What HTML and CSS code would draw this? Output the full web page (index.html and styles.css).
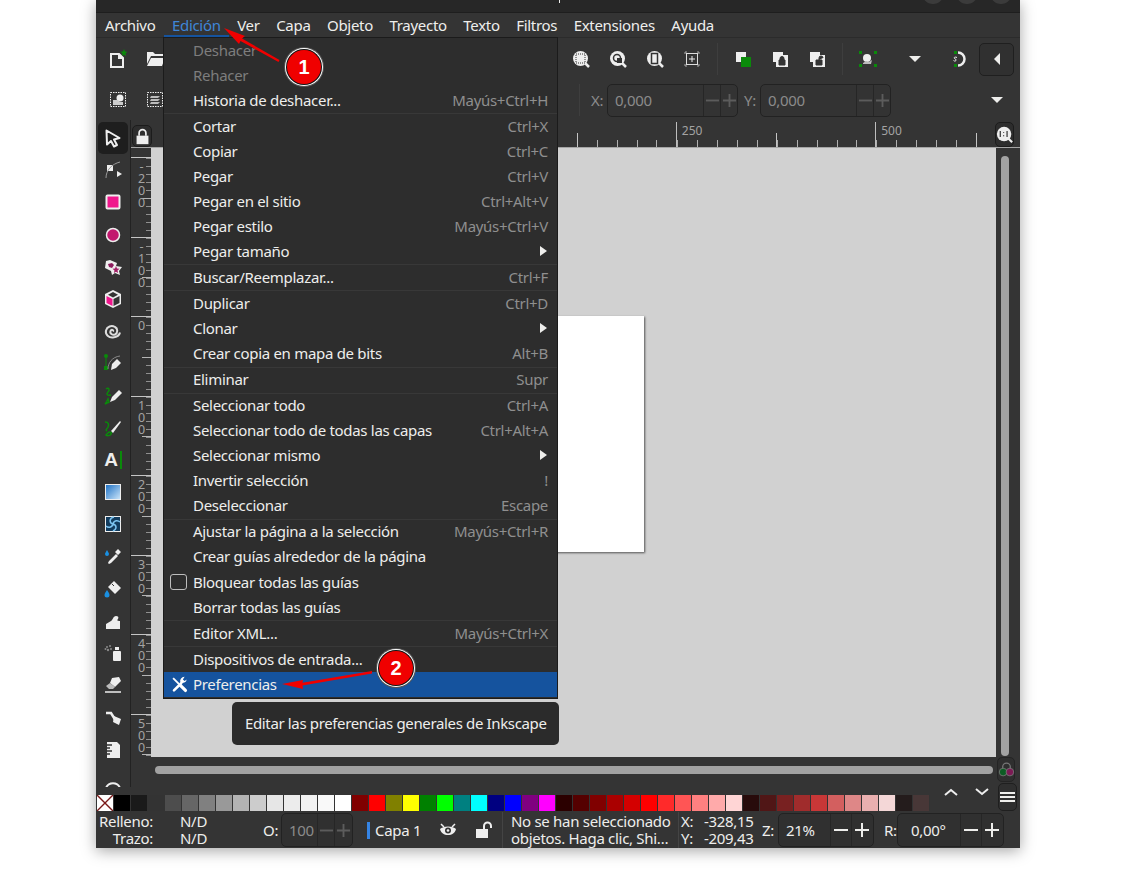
FILE: index.html
```html
<!DOCTYPE html>
<html lang="es">
<head>
    <meta charset="UTF-8">
    <title>Inkscape - Edición</title>
    <link rel="stylesheet" href="styles.css">
</head>
<body>
<svg class="sprites" xmlns="http://www.w3.org/2000/svg">
    <defs><linearGradient id="g-blue" x1="0" y1="0" x2="1" y2="1"><stop offset="0" stop-color="#1b6fc4"/><stop offset="1" stop-color="#cfe8fb"/></linearGradient></defs>
    <symbol id="i-new" viewBox="0 0 20 20"><path d="M4 5h8l4 4v9H4z" fill="none" stroke="#eee" stroke-width="2"/><path d="M11 4v6h6z" fill="#eee"/><path d="M17 0l1 2.500 2.500.3-2 1.700.6 2.500-2.100-1.300-2.100 1.300.6-2.500-2-1.700 2.500-.3z" fill="#0a8a0a"/></symbol>
    <symbol id="i-open" viewBox="0 0 20 20"><path d="M2 3h6l2 2h8v2H6l-4 8zM6 9h14l-3 8H2z" fill="#eee"/></symbol>
    <symbol id="i-selgroup" viewBox="0 0 20 20"><rect x="2.500" y="2.500" width="15" height="14" fill="none" stroke="#eee" stroke-dasharray="1.500 1"/><circle cx="12" cy="8" r="3.500" fill="#eee"/><path d="M5 10h5l2 2h3v3H5z" fill="#ccc"/></symbol>
    <symbol id="i-layers" viewBox="0 0 20 20"><rect x="2.500" y="2.500" width="15" height="14" fill="none" stroke="#eee" stroke-dasharray="1.500 1"/><path d="M6 6h9l-2 2H5zM6 9h9l-2 2H5zM6 12h9l-2 2H5z" fill="#bbb"/></symbol>
    <symbol id="i-zoomsel" viewBox="0 0 20 20"><circle cx="9.500" cy="9.500" r="7.500" fill="#eee"/><path d="M14 14l4 4" stroke="#eee" stroke-width="2.500"/><rect x="5" y="5" width="9" height="9" fill="none" stroke="#333" stroke-dasharray="1 1"/></symbol>
    <symbol id="i-zoomdraw" viewBox="0 0 20 20"><circle cx="9.500" cy="9.500" r="7.500" fill="#eee"/><path d="M14 14l4 4" stroke="#eee" stroke-width="2.500"/><circle cx="9" cy="9" r="3.500" fill="none" stroke="#333" stroke-width="1.500"/><rect x="9" y="9" width="5" height="5" fill="#333"/></symbol>
    <symbol id="i-zoompage" viewBox="0 0 20 20"><circle cx="9.500" cy="9.500" r="7.500" fill="#eee"/><path d="M14 14l4 4" stroke="#eee" stroke-width="2.500"/><rect x="6.500" y="4.500" width="6" height="10" fill="#eee" stroke="#333" stroke-width="1.500"/></symbol>
    <symbol id="i-center" viewBox="0 0 20 20"><path d="M3 5V3h2M15 3h2v2M17 15v2h-2M5 17H3v-2" fill="none" stroke="#aaa"/><rect x="4.500" y="4.500" width="11" height="11" fill="none" stroke="#ddd"/><path d="M10 7v6M7 10h6" stroke="#eee"/></symbol>
    <symbol id="i-snapgreen" viewBox="0 0 20 20"><path d="M3 3h10v10H3z" fill="#eee"/><rect x="8" y="8" width="10" height="10" fill="#0a8a0a"/></symbol>
    <symbol id="i-locka" viewBox="0 0 20 20"><path d="M3 3h10v3H6v7H3z" fill="#eee"/><rect x="6" y="6" width="12" height="12" fill="#eee"/><path d="M9 11h6v5H9zM10 11V9.500a2 2 0 0 1 4 0V11" fill="#333" stroke="#333"/></symbol>
    <symbol id="i-lockb" viewBox="0 0 20 20"><path d="M3 3h10v3H6v7H3z" fill="#eee"/><rect x="6" y="6" width="12" height="12" fill="#eee"/><path d="M9 11h6v5H9zM12 11V9a2 2 0 0 1 4 0" fill="#333" stroke="#333"/></symbol>
    <symbol id="i-snap" viewBox="0 0 20 20"><path d="M1 2h3v3H1zM16 2h3v3h-3zM1 15h3v3H1zM16 15h3v3h-3z" fill="#0a8a0a"/><circle cx="9" cy="9" r="4" fill="#eee"/><path d="M5 14l3-2 3 1 3-2-1 4H5z" fill="#bbb"/></symbol>
    <symbol id="i-snapring" viewBox="0 0 20 20"><path d="M9 3.500a6.500 6.500 0 1 1 0 13" fill="none" stroke="#eee" stroke-width="2.500"/><rect x="5" y="2" width="3" height="3" fill="#0a8a0a"/><rect x="5" y="15" width="3" height="3" fill="#0a8a0a"/><path d="M8 8.500c-2-1-3.500 0-2.500 1s2.500 1 1.500 2-2 .5-2.500 0" fill="none" stroke="#eee"/></symbol>
    <symbol id="i-lock" viewBox="0 0 20 20"><path d="M3 9h14v10H3z" fill="#eee"/><path d="M6 9V6a4 4 0 0 1 8 0v3" fill="none" stroke="#eee" stroke-width="2"/></symbol>
    <symbol id="i-unlock" viewBox="0 0 20 20"><path d="M2 9h12v9H2z" fill="#eee"/><path d="M10 9V6a3.500 3.500 0 0 1 7 0v2" fill="none" stroke="#eee" stroke-width="2"/></symbol>
    <symbol id="i-eye" viewBox="0 0 20 20"><path d="M2 9c3-3.500 13-3.500 16 0-1 4-4 6-8 6s-7-2-8-6z" fill="#eee"/><circle cx="10" cy="10.500" r="3" fill="#333"/><circle cx="10" cy="10.500" r="1.300" fill="#eee"/><path d="M3 4l3 3M17 4l-3 3" stroke="#eee" stroke-width="1.500"/></symbol>
    <symbol id="i-zoom11" viewBox="0 0 20 20"><circle cx="9.500" cy="9.500" r="8.500" fill="#eee"/><path d="M14 14l5 5" stroke="#eee" stroke-width="2.500"/><path d="M5 6v7M9 7v1M9 11v1M13 6v7" stroke="#222" stroke-width="1.300" fill="none"/></symbol>
    <symbol id="i-colors" viewBox="0 0 20 20"><circle cx="10" cy="7" r="4.500" fill="none" stroke="#777" stroke-width="1.500"/><circle cx="6" cy="13" r="4.500" fill="#0d5c24" stroke="#777"/><circle cx="14" cy="13" r="4.500" fill="#7c1a55" stroke="#777"/></symbol>
    <symbol id="i-minus" viewBox="0 0 16 16"><path d="M1 8h14" stroke="currentColor" stroke-width="2"/></symbol>
    <symbol id="i-plus" viewBox="0 0 16 16"><path d="M1 8h14M8 1v14" stroke="currentColor" stroke-width="2"/></symbol>
    <symbol id="t-selector" viewBox="0 0 20 20"><path d="M3.500 2.500l13 7.500-5.500 1.500 3 5.500-3 1.500-3-5.500-4 3.500z" fill="#1f1f1f" stroke="#eee" stroke-width="2" stroke-linejoin="round"/></symbol>
    <symbol id="t-node" viewBox="0 0 20 20"><rect x="4" y="5" width="6" height="6" fill="#eee"/><path d="M3 18c0-8 6-14 14-16" fill="none" stroke="#999"/><path d="M14 11l5 3-5 3z" fill="#eee"/></symbol>
    <symbol id="t-rect" viewBox="0 0 20 20"><rect x="3.500" y="3.500" width="13" height="13" rx="1" fill="#f0168c" stroke="#eee" stroke-width="2"/></symbol>
    <symbol id="t-ellipse" viewBox="0 0 20 20"><circle cx="10" cy="10" r="6.500" fill="#c2186e" stroke="#eee" stroke-width="1.500"/></symbol>
    <symbol id="t-star" viewBox="0 0 20 20"><path d="M7 3l7 3-1 3 6 1-3 4 1 4-5-2-3 2-1-4-6-3 1-7z" fill="#eee"/><path d="M5 7l4-1 2 2-2 3-3-1z" fill="#8e1c5e"/><path d="M13 9l1 2.500 2.500.3-2 1.700.6 2.500-2.100-1.300-2.100 1.300.6-2.500-2-1.700 2.500-.3z" fill="#a01c64"/></symbol>
    <symbol id="t-cube" viewBox="0 0 20 20"><path d="M10 1l8 4v10l-8 4-8-4V5z" fill="#eee"/><path d="M3.500 7l6 3v7l-6-3z" fill="#f0168c"/><path d="M16.500 7l-6 3v7l6-3z" fill="#333"/><path d="M10 3l5 2.700-5 2.700-5-2.700z" fill="#333"/></symbol>
    <symbol id="t-spiral" viewBox="0 0 20 20"><path d="M10 10.500c1-1.500-1.500-2.500-2.500-.5-1 2.500 2 4.500 4.500 3.500 3-1.500 3-6 0-7.500-3.500-2-8-.5-9 3.500-1 4 3 7.500 7 7 4-.5 6.500-2.500 7-5" fill="none" stroke="#ddd" stroke-width="2"/></symbol>
    <symbol id="t-bezier" viewBox="0 0 20 20"><rect x="1" y="13" width="4" height="4" fill="#0a8a0a"/><circle cx="3" cy="3" r="2" fill="#0a8a0a"/><path d="M3 4v9" stroke="#0a8a0a"/><path d="M8 17l1-6 5-5 4 4-5 5z" fill="#eee"/><path d="M5 16c0-6 4-12 12-13" fill="none" stroke="#888"/></symbol>
    <symbol id="t-pencil" viewBox="0 0 20 20"><path d="M7 16l2-5 7-7 3 3-7 7z" fill="#eee"/><path d="M3 3c3-2 4 1 2 3s-1 4 3 3M5 13c-1 2-2 4-3 5l4-2z" fill="none" stroke="#0a8a0a" stroke-width="1.500"/></symbol>
    <symbol id="t-callig" viewBox="0 0 20 20"><path d="M8 13l9-10 1 1-8 11z" fill="#eee"/><path d="M6 14c2 0 3 1 2 2-1 2-4 2-5 1zM2 4c4 0 4 3 3 5s-3 3-1 4" fill="none" stroke="#0a8a0a" stroke-width="1.500"/></symbol>
    <symbol id="t-grad" viewBox="0 0 20 20"><rect x="2.500" y="2.500" width="15" height="15" fill="url(#g-blue)" stroke="#eee"/></symbol>
    <symbol id="t-mesh" viewBox="0 0 20 20"><rect x="2.500" y="2.500" width="15" height="15" fill="#123c5e" stroke="#eee"/><path d="M10 10C6 9 6 4 11 3M10 10c1-4 5-4 7-2M10 10c4 1 4 5 0 7M10 10c-1 4-5 4-7 2" fill="none" stroke="#7cc4f0" stroke-width="1.500"/></symbol>
    <symbol id="t-dropper" viewBox="0 0 20 20"><path d="M8 16l-2 1-1-1 1-2 7-7 2 2zM12 5l3-3 3 3-3 3z" fill="#eee"/><path d="M4 3c-1 2-2 3-2 4a2 2 0 0 0 4 0c0-1-1-2-2-4z" fill="#1a8fe0"/></symbol>
    <symbol id="t-bucket" viewBox="0 0 20 20"><path d="M11 2l7 7-6 6-7-7z" fill="#eee"/><path d="M9 5l2 2" stroke="#333"/><path d="M4 11c-1 2-2.500 3-2.500 5a2.500 2.500 0 0 0 5 0c0-2-1.500-3-2.500-5z" fill="#1a8fe0"/></symbol>
    <symbol id="t-tweak" viewBox="0 0 20 20"><path d="M3 18v-5l5-3c2-1 2-5 5-5 2 0 3 1 2 3-1 1-1 2 2 2v8z" fill="#eee"/></symbol>
    <symbol id="t-spray" viewBox="0 0 20 20"><rect x="10" y="8" width="8" height="10" rx="1" fill="#eee"/><rect x="12" y="4" width="4" height="3" fill="#eee"/><circle cx="4" cy="4" r="1" fill="#888"/><circle cx="7" cy="3" r="1" fill="#888"/><circle cx="5" cy="7" r="1.200" fill="#888"/><circle cx="8" cy="6" r="1" fill="#888"/><circle cx="2.500" cy="6" r="1" fill="#888"/></symbol>
    <symbol id="t-eraser" viewBox="0 0 20 20"><path d="M9 3l7-1 2 4-6 6-5-4z" fill="#eee"/><path d="M7 8l5 4-2 2H6l-3-3z" fill="#bbb"/><path d="M2 17h16" stroke="#eee" stroke-width="1.500"/></symbol>
    <symbol id="t-connector" viewBox="0 0 20 20"><path d="M3 6h5l5 8" fill="none" stroke="#eee" stroke-width="2.500"/><path d="M11 9l7 3-2 6-6-3z" fill="#eee"/></symbol>
    <symbol id="t-pages" viewBox="0 0 20 20"><path d="M4 2h10l3 3v13H4z" fill="#eee"/><path d="M4 5h5M4 8h3M4 11h5M4 14h3" stroke="#333" stroke-width="1.300"/></symbol>
    <symbol id="t-measure" viewBox="0 0 20 20"><path d="M3 16a7.500 7.500 0 0 1 14 0" fill="none" stroke="#eee" stroke-width="2"/></symbol>
    <symbol id="i-tools" viewBox="0 0 20 20"><path d="M2.500 2.500l7 7" stroke="#fff" stroke-width="2.200"/><path d="M11 11l6 6" stroke="#fff" stroke-width="3.800" stroke-linecap="round"/><path d="M3.500 17L12 8.500" stroke="#fff" stroke-width="3" stroke-linecap="round"/><path d="M16 1a5 5 0 0 0-5 6.500 5 5 0 0 0 7.500-3.500L16 6l-2-2z" fill="#fff"/></symbol>
</svg>

<div class="window">
    <div class="titlebar">
        <span class="title-tick"></span>
        <div class="wm-buttons"><span></span><span></span><span></span></div>
    </div>

    <nav class="menubar">
        <span class="menubar-item">Archivo</span>
        <span class="menubar-item active">Edición</span>
        <span class="menubar-item">Ver</span>
        <span class="menubar-item">Capa</span>
        <span class="menubar-item">Objeto</span>
        <span class="menubar-item">Trayecto</span>
        <span class="menubar-item">Texto</span>
        <span class="menubar-item">Filtros</span>
        <span class="menubar-item">Extensiones</span>
        <span class="menubar-item">Ayuda</span>
    </nav>

    <div class="toolbar toolbar-main">
        <svg class="ico"><use href="#i-new"/></svg>
        <svg class="ico"><use href="#i-open"/></svg>
        <div class="toolbar-right">
            <svg class="ico"><use href="#i-zoomsel"/></svg>
            <svg class="ico"><use href="#i-zoomdraw"/></svg>
            <svg class="ico"><use href="#i-zoompage"/></svg>
            <svg class="ico"><use href="#i-center"/></svg>
            <span class="tb-sep"></span>
            <svg class="ico"><use href="#i-snapgreen"/></svg>
            <svg class="ico"><use href="#i-locka"/></svg>
            <svg class="ico"><use href="#i-lockb"/></svg>
            <span class="tb-sep"></span>
            <svg class="ico"><use href="#i-snap"/></svg>
            <span class="tri-down"></span>
            <svg class="ico"><use href="#i-snapring"/></svg>
            <button class="more-btn"><span class="tri-left"></span></button>
        </div>
    </div>

    <div class="toolbar toolbar-opts">
        <svg class="ico"><use href="#i-selgroup"/></svg>
        <svg class="ico"><use href="#i-layers"/></svg>
        <div class="coords">
            <span class="tb-sep"></span>
            <span class="coord-label dim">X:</span>
            <div class="spin spin-coord dim">
                <span class="spin-value">0,000</span>
                <span class="spin-btn"><svg class="sign"><use href="#i-minus"/></svg></span>
                <span class="spin-btn"><svg class="sign"><use href="#i-plus"/></svg></span>
            </div>
            <span class="coord-label dim">Y:</span>
            <div class="spin spin-coord dim">
                <span class="spin-value">0,000</span>
                <span class="spin-btn"><svg class="sign"><use href="#i-minus"/></svg></span>
                <span class="spin-btn"><svg class="sign"><use href="#i-plus"/></svg></span>
            </div>
        </div>
        <span class="tri-down tri-end"></span>
    </div>

    <div class="workspace">
        <div class="tools">
            <span class="tool current"><svg class="ico"><use href="#t-selector"/></svg></span>
            <span class="tool"><svg class="ico"><use href="#t-node"/></svg></span>
            <span class="tool"><svg class="ico"><use href="#t-rect"/></svg></span>
            <span class="tool"><svg class="ico"><use href="#t-ellipse"/></svg></span>
            <span class="tool"><svg class="ico"><use href="#t-star"/></svg></span>
            <span class="tool"><svg class="ico"><use href="#t-cube"/></svg></span>
            <span class="tool"><svg class="ico"><use href="#t-spiral"/></svg></span>
            <span class="tool"><svg class="ico"><use href="#t-bezier"/></svg></span>
            <span class="tool"><svg class="ico"><use href="#t-pencil"/></svg></span>
            <span class="tool"><svg class="ico"><use href="#t-callig"/></svg></span>
            <span class="tool tool-text">A<i></i></span>
            <span class="tool"><svg class="ico"><use href="#t-grad"/></svg></span>
            <span class="tool"><svg class="ico"><use href="#t-mesh"/></svg></span>
            <span class="tool"><svg class="ico"><use href="#t-dropper"/></svg></span>
            <span class="tool"><svg class="ico"><use href="#t-bucket"/></svg></span>
            <span class="tool"><svg class="ico"><use href="#t-tweak"/></svg></span>
            <span class="tool"><svg class="ico"><use href="#t-spray"/></svg></span>
            <span class="tool"><svg class="ico"><use href="#t-eraser"/></svg></span>
            <span class="tool"><svg class="ico"><use href="#t-connector"/></svg></span>
            <span class="tool"><svg class="ico"><use href="#t-pages"/></svg></span>
            <span class="tool"><svg class="ico"><use href="#t-measure"/></svg></span>
        </div>

        <div class="canvas-area">
            <div class="ruler-row">
                <button class="corner-btn"><svg class="ico-sm"><use href="#i-lock"/></svg></button>
                <div class="hruler">
                    <div class="hblock"></div>
                    <div class="hblock"></div>
                    <div class="hblock"><span>250</span></div>
                    <div class="hblock"><span>500</span></div>
                </div>
                <button class="zoom-btn"><svg class="ico-sm"><use href="#i-zoom11"/></svg></button>
            </div>

            <div class="canvas-row">
                <div class="vruler">
                    <div class="vblock"><span>-200</span></div>
                    <div class="vblock"><span>-100</span></div>
                    <div class="vblock"><span>0</span></div>
                    <div class="vblock"><span>100</span></div>
                    <div class="vblock"><span>200</span></div>
                    <div class="vblock"><span>300</span></div>
                    <div class="vblock"><span>400</span></div>
                    <div class="vblock"><span>500</span></div>
                </div>
                <div class="canvas"><div class="sheet"></div></div>
                <div class="vscroll"><span class="vthumb"></span></div>
            </div>

            <div class="hscroll-row">
                <span class="hthumb"></span>
                <button class="color-btn"><svg class="ico-sm"><use href="#i-colors"/></svg></button>
            </div>
        </div>
    </div>

    <div class="palette-row">
        <div class="palette">
            <span class="swatch none"><svg viewBox="0 0 17 17"><path d="M0 0l17 17M17 0L0 17" stroke="#7a1a1a" stroke-width="1.500"/></svg></span>
            <span class="swatch c000"></span><span class="swatch c1a1"></span><span class="swatch c333"></span><span class="swatch c4d4"></span><span class="swatch c666"></span><span class="swatch c808"></span><span class="swatch c999"></span><span class="swatch cb3b"></span><span class="swatch cccc"></span><span class="swatch ce6e"></span><span class="swatch cece"></span><span class="swatch cf2f"></span><span class="swatch cf9f"></span><span class="swatch cfff"></span>
            <span class="swatch maroon"></span><span class="swatch red"></span><span class="swatch olive"></span><span class="swatch yellow"></span><span class="swatch green"></span><span class="swatch lime"></span><span class="swatch teal"></span><span class="swatch aqua"></span><span class="swatch navy"></span><span class="swatch blue"></span><span class="swatch purple"></span><span class="swatch fuchsia"></span>
            <span class="swatch r1"></span><span class="swatch r2"></span><span class="swatch r3"></span><span class="swatch r4"></span><span class="swatch r5"></span><span class="swatch r6"></span><span class="swatch r7"></span><span class="swatch r8"></span><span class="swatch r9"></span><span class="swatch r10"></span><span class="swatch r11"></span>
            <span class="swatch m1"></span><span class="swatch m2"></span><span class="swatch m3"></span><span class="swatch m4"></span><span class="swatch m5"></span><span class="swatch m6"></span><span class="swatch m7"></span><span class="swatch m8"></span><span class="swatch m9"></span><span class="swatch g1"></span><span class="swatch g2"></span>
        </div>
        <div class="palette-nav">
            <svg class="chev" viewBox="0 0 14 8"><path d="M1 7l6-5 6 5" fill="none" stroke="#eee" stroke-width="2"/></svg>
            <svg class="chev" viewBox="0 0 14 8"><path d="M1 1l6 5 6-5" fill="none" stroke="#eee" stroke-width="2"/></svg>
            <button class="burger"><i></i><i></i><i></i></button>
        </div>
    </div>

    <footer class="statusbar">
        <div class="fs-labels">Relleno:<br>Trazo:</div>
        <div class="fs-values">N/D<br>N/D</div>
        <span class="label-o">O:</span>
        <div class="spin spin-opacity dim">
            <span class="spin-value">100</span>
            <span class="spin-btn"><svg class="sign"><use href="#i-minus"/></svg></span>
            <span class="spin-btn"><svg class="sign"><use href="#i-plus"/></svg></span>
        </div>
        <span class="layer-mark"></span>
        <span class="layer-name">Capa 1</span>
        <svg class="ico eye"><use href="#i-eye"/></svg>
        <svg class="ico unlock"><use href="#i-unlock"/></svg>
        <div class="status-msg">No se han seleccionado<br>objetos. Haga clic, Shi…</div>
        <div class="pos-labels">X:<br>Y:</div>
        <div class="pos-values">-328,15<br>-209,43</div>
        <span class="label-z">Z:</span>
        <div class="spin spin-zoom">
            <span class="spin-value">21%</span>
            <span class="spin-btn"><svg class="sign"><use href="#i-minus"/></svg></span>
            <span class="spin-btn"><svg class="sign"><use href="#i-plus"/></svg></span>
        </div>
        <span class="label-r">R:</span>
        <div class="spin spin-rot">
            <span class="spin-value">0,00°</span>
            <span class="spin-btn"><svg class="sign"><use href="#i-minus"/></svg></span>
            <span class="spin-btn"><svg class="sign"><use href="#i-plus"/></svg></span>
        </div>
    </footer>

    <div class="menu">
        <div class="menu-item off"><span>Deshacer</span></div>
        <div class="menu-item off"><span>Rehacer</span></div>
        <div class="menu-item"><span>Historia de deshacer...</span><span class="key">Mayús+Ctrl+H</span></div>
        <hr>
        <div class="menu-item"><span>Cortar</span><span class="key">Ctrl+X</span></div>
        <div class="menu-item"><span>Copiar</span><span class="key">Ctrl+C</span></div>
        <div class="menu-item"><span>Pegar</span><span class="key">Ctrl+V</span></div>
        <div class="menu-item"><span>Pegar en el sitio</span><span class="key">Ctrl+Alt+V</span></div>
        <div class="menu-item"><span>Pegar estilo</span><span class="key">Mayús+Ctrl+V</span></div>
        <div class="menu-item"><span>Pegar tamaño</span><span class="sub"></span></div>
        <hr>
        <div class="menu-item"><span>Buscar/Reemplazar...</span><span class="key">Ctrl+F</span></div>
        <hr>
        <div class="menu-item"><span>Duplicar</span><span class="key">Ctrl+D</span></div>
        <div class="menu-item"><span>Clonar</span><span class="sub"></span></div>
        <div class="menu-item"><span>Crear copia en mapa de bits</span><span class="key">Alt+B</span></div>
        <hr>
        <div class="menu-item"><span>Eliminar</span><span class="key">Supr</span></div>
        <hr>
        <div class="menu-item"><span>Seleccionar todo</span><span class="key">Ctrl+A</span></div>
        <div class="menu-item"><span>Seleccionar todo de todas las capas</span><span class="key">Ctrl+Alt+A</span></div>
        <div class="menu-item"><span>Seleccionar mismo</span><span class="sub"></span></div>
        <div class="menu-item"><span>Invertir selección</span><span class="key">!</span></div>
        <div class="menu-item"><span>Deseleccionar</span><span class="key">Escape</span></div>
        <hr>
        <div class="menu-item"><span>Ajustar la página a la selección</span><span class="key">Mayús+Ctrl+R</span></div>
        <div class="menu-item"><span>Crear guías alrededor de la página</span></div>
        <div class="menu-item"><i class="check"></i><span>Bloquear todas las guías</span></div>
        <div class="menu-item"><span>Borrar todas las guías</span></div>
        <hr>
        <div class="menu-item"><span>Editor XML...</span><span class="key">Mayús+Ctrl+X</span></div>
        <hr>
        <div class="menu-item"><span>Dispositivos de entrada...</span></div>
        <div class="menu-item selected"><svg class="menu-ico"><use href="#i-tools"/></svg><span>Preferencias</span></div>
    </div>

    <div class="tooltip">Editar las preferencias generales de Inkscape</div>

    <svg class="arrows" viewBox="0 0 924 848">
        <path d="M128 28L149 36 146 38.500 183.500 60 182.500 62 144.500 41 143 44z" fill="#f00000"/>
        <path d="M186 684L207 680 206.500 682.800 276 671 276 673.500 206.500 685.500 207 689z" fill="#f00000"/>
    </svg>
    <span class="badge badge-one">1</span>
    <span class="badge badge-two">2</span>
</div>
</body>
</html>
```
FILE: styles.css
```css
* {
    box-sizing: border-box;
}

html, body {
    height: 100%;
    margin: 0;
    background: #ffffff;
    overflow: hidden;
}

body {
    font-family: "Noto Sans", "Open Sans", sans-serif;
    font-size: 15px;
    letter-spacing: -0.3px;
    color: #eeeeec;
}

button {
    padding: 0;
    font: inherit;
    color: inherit;
}

.sprites {
    position: absolute;
    width: 0;
    height: 0;
}

.window {
    position: relative;
    display: flex;
    flex-direction: column;
    width: 924px;
    height: 848px;
    margin-left: 96px;
    background: #343434;
    box-shadow: 0 3px 14px rgba(0, 0, 0, 0.35);
}

.ico {
    display: block;
    width: 20px;
    height: 20px;
    flex: none;
}

.ico-sm {
    display: block;
    flex: none;
    width: 17px;
    height: 17px;
}

.dim {
    color: #8b8b8b;
}

.dim .sign {
    color: #5c5c5c;
}

/* title bar, only its lower edge is in the picture */
.titlebar {
    display: flex;
    flex: none;
    justify-content: flex-end;
    height: 13px;
    padding-right: 8px;
    overflow: hidden;
    background: #272727;
    border-bottom: 1px solid #1e1e1e;
}

.title-tick {
    width: 1px;
    height: 3px;
    margin-right: 362px;
    background: #eeeeec;
}

.wm-buttons {
    display: flex;
    gap: 12px;
    margin-top: -18px;
}

.wm-buttons span {
    width: 22px;
    height: 22px;
    border-radius: 50%;
    background: #3b3b3b;
}

.menubar {
    display: flex;
    flex: none;
    align-items: center;
    gap: 16.500px;
    height: 25px;
    padding-left: 9px;
    border-bottom: 1px solid #2b2b2b;
}

.menubar-item.active {
    align-self: stretch;
    margin: 0 -8px;
    padding: 2px 8px 0;
    color: #3f86d8;
    border-bottom: 2px solid #15539e;
}

.toolbar {
    display: flex;
    flex: none;
    align-items: center;
}

.toolbar-main {
    height: 44px;
    padding: 0 0 2px 11px;
    gap: 18px;
}

.toolbar-right {
    display: flex;
    align-items: center;
    gap: 17px;
    margin-left: auto;
    padding-right: 6px;
}

.tb-sep {
    width: 1px;
    height: 32px;
    margin: 0 -2px;
    background: #3e3e3e;
}

.tri-down {
    width: 0;
    height: 0;
    margin: 0 11px 0 14px;
    border-left: 6px solid transparent;
    border-right: 6px solid transparent;
    border-top: 6px solid #eeeeec;
}

.more-btn {
    display: flex;
    align-items: center;
    justify-content: center;
    width: 35px;
    height: 33px;
    margin-left: -7px;
    background: #303030;
    border: 1px solid #1f1f1f;
    border-radius: 5px;
}

.tri-left {
    width: 0;
    height: 0;
    border-top: 6px solid transparent;
    border-bottom: 6px solid transparent;
    border-right: 6px solid #eeeeec;
}

.toolbar-opts {
    height: 38px;
    padding: 0 17px 2px 12px;
    gap: 17px;
}

.coords {
    display: flex;
    align-items: center;
    margin-left: 399px;
}

.coords .tb-sep {
    margin-right: 11px;
}

.coord-label {
    width: 16px;
}

.tri-end {
    margin: 0 0 0 auto;
}

.spin {
    display: flex;
    align-items: stretch;
    height: 34px;
    background: #303030;
    border: 1px solid #222222;
    border-radius: 5px;
}

.spin-value {
    flex: 1;
    align-self: center;
    padding-left: 7px;
}

.spin-btn {
    display: flex;
    align-items: center;
    justify-content: center;
    width: 17px;
    border-left: 1px solid #262626;
}

.sign {
    width: 15px;
    height: 15px;
}

.spin-coord {
    width: 131px;
    height: 33px;
    margin-right: 6px;
    background: #333333;
}

/* tools + rulers + canvas */
.workspace {
    display: flex;
    flex: none;
    height: 667px;
}

.tools {
    display: flex;
    flex-direction: column;
    flex: none;
    width: 35px;
    height: 667px;
    padding: 2px 2px 0;
    overflow: hidden;
    border-right: 1px solid #222222;
}

.tool {
    display: flex;
    flex: none;
    align-items: center;
    justify-content: center;
    height: 32.200px;
}

.tool.current {
    background: #1e1e1e;
    border-radius: 5px;
}

.tool-text {
    gap: 2px;
    font-family: "Liberation Sans", sans-serif;
    font-size: 19px;
    font-weight: bold;
}

.tool-text i {
    width: 2px;
    height: 18px;
    background: #0a8a0a;
}

.canvas-area {
    display: flex;
    flex-direction: column;
    flex: 1;
    min-width: 0;
}

.ruler-row {
    display: flex;
    flex: none;
    height: 27px;
}

.corner-btn {
    display: flex;
    flex: none;
    align-items: center;
    justify-content: center;
    width: 20px;
    height: 22px;
    margin: 5px 0 0 1px;
    background: #2d2d2d;
    border: 1px solid #1c1c1c;
    border-radius: 5px;
}

.hruler {
    display: flex;
    flex: 1;
    min-width: 0;
    padding-left: 125px;
    margin-top: 2px;
    overflow: hidden;
}

.hblock {
    position: relative;
    flex: none;
    width: 199.400px;
    background:
        linear-gradient(#c4c4c4, #c4c4c4) 99.700px 100% / 1px 14px no-repeat,
        repeating-linear-gradient(90deg, #b0b0b0 0 1px, transparent 1px 19.940px) 0 100% / 100% 7px no-repeat;
    border-left: 1px solid #bdbdbd;
}

.hblock span {
    position: absolute;
    top: 0;
    left: 5px;
    font-size: 12px;
    color: #a3a3a3;
    letter-spacing: 0;
}

.zoom-btn {
    display: flex;
    flex: none;
    align-items: center;
    justify-content: center;
    width: 19px;
    height: 25px;
    margin: 2px 6px 0 0;
    background: #2d2d2d;
    border: 1px solid #1c1c1c;
    border-radius: 5px;
}

.canvas-row {
    display: flex;
    flex: none;
    height: 610px;
    border-top: 1px solid #a5a5a5;
}

.vruler {
    flex: none;
    width: 20px;
    padding-top: 9px;
    overflow: hidden;
}

.vblock {
    height: 79.500px;
    padding: 3px 0 0 6px;
    background:
        linear-gradient(#b5b5b5, #b5b5b5) 100% 39.800px / 9px 1px no-repeat,
        repeating-linear-gradient(#909090 0 1px, transparent 1px 7.950px) 100% 0 / 5px 100% no-repeat;
    border-top: 1px solid #c4c4c4;
}

/* digits stand one under the other: the narrow box breaks after each one */
.vblock span {
    display: block;
    width: 9px;
    font-size: 12.500px;
    line-height: 12px;
    letter-spacing: 0;
    text-align: center;
    word-break: break-all;
    color: #a3a3a3;
}

.canvas {
    position: relative;
    flex: 1;
    background: #d1d1d1;
}

.sheet {
    position: absolute;
    top: 168px;
    left: 200px;
    width: 293px;
    height: 236px;
    background: #ffffff;
    box-shadow: 1px 1px 2px rgba(0, 0, 0, 0.6);
}

.vscroll {
    flex: none;
    width: 24px;
    padding: 8px 0 0 5px;
}

.vthumb {
    display: block;
    width: 8px;
    height: 600px;
    border-radius: 4px;
    background: #a2a2a2;
}

.hscroll-row {
    display: flex;
    flex: 1;
    align-items: flex-start;
    padding-left: 24px;
}

.hthumb {
    width: 838px;
    height: 8px;
    margin-top: 9px;
    border-radius: 4px;
    background: #a2a2a2;
}

.color-btn {
    display: flex;
    align-items: center;
    justify-content: center;
    width: 18px;
    height: 25px;
    margin-left: 4px;
    background: #2f2f2f;
    border: 1px solid #242424;
    border-radius: 5px;
}

/* palette */
.palette-row {
    display: flex;
    flex: none;
    align-items: flex-end;
    height: 25px;
    padding: 0 3px 1px 1px;
}

.palette {
    display: flex;
}

.swatch {
    display: block;
    width: 17px;
    height: 16px;
    border-right: 1px solid #333333;
}

.swatch svg {
    display: block;
    width: 16px;
    height: 16px;
}

.none { background: #ffffff; }
.c000 { background: #000000; }
.c1a1 { background: #1a1a1a; }
.c333 { background: #333333; }
.c4d4 { background: #4d4d4d; }
.c666 { background: #666666; }
.c808 { background: #808080; }
.c999 { background: #999999; }
.cb3b { background: #b3b3b3; }
.cccc { background: #cccccc; }
.ce6e { background: #e6e6e6; }
.cece { background: #ececec; }
.cf2f { background: #f2f2f2; }
.cf9f { background: #f9f9f9; }
.cfff { background: #ffffff; }
.maroon { background: #800000; }
.red { background: #ff0000; }
.olive { background: #808000; }
.yellow { background: #ffff00; }
.green { background: #008000; }
.lime { background: #00ff00; }
.teal { background: #008080; }
.aqua { background: #00ffff; }
.navy { background: #000080; }
.blue { background: #0000ff; }
.purple { background: #800080; }
.fuchsia { background: #ff00ff; }
.r1 { background: #2b0000; }
.r2 { background: #550000; }
.r3 { background: #800000; }
.r4 { background: #aa0000; }
.r5 { background: #d40000; }
.r6 { background: #ff0000; }
.r7 { background: #ff2a2a; }
.r8 { background: #ff5555; }
.r9 { background: #ff8080; }
.r10 { background: #ffaaaa; }
.r11 { background: #ffd5d5; }
.m1 { background: #280b0b; }
.m2 { background: #501616; }
.m3 { background: #782121; }
.m4 { background: #a02c2c; }
.m5 { background: #c83737; }
.m6 { background: #d35f5f; }
.m7 { background: #de8787; }
.m8 { background: #e9afaf; }
.m9 { background: #f4d7d7; }
.g1 { background: #241c1c; }
.g2 { background: #483737; }

.palette-nav {
    display: flex;
    align-items: center;
    gap: 17px;
    margin-left: auto;
}

.chev {
    width: 14px;
    height: 8px;
    margin-bottom: 10px;
}

.burger {
    display: flex;
    flex-direction: column;
    align-items: center;
    justify-content: center;
    gap: 2px;
    width: 19px;
    height: 28px;
    margin-left: -8px;
    background: #2f2f2f;
    border: 1px solid #1f1f1f;
    border-radius: 5px;
}

.burger i {
    width: 15px;
    height: 2px;
    background: #eeeeec;
}

/* status bar */
.statusbar {
    display: flex;
    flex: none;
    align-items: center;
    height: 36px;
    line-height: 17px;
}

.fs-labels {
    flex: none;
    width: 57px;
    text-align: right;
}

.fs-values {
    flex: none;
    width: 110px;
    padding-left: 27px;
}

.label-o {
    width: 18px;
}

.spin-opacity {
    width: 72px;
    padding-right: 1px;
}

.layer-mark {
    flex: none;
    width: 3px;
    height: 17px;
    margin: 0 5px 0 14px;
    background: #3584e4;
}

.layer-name {
    width: 60px;
}

.eye {
    margin-left: 3px;
}

.unlock {
    margin-left: 16px;
}

.status-msg {
    flex: none;
    width: 177px;
    height: 36px;
    padding: 1px 0 0 8px;
    margin-left: 8px;
    border-left: 1px solid #444444;
    border-right: 1px solid #444444;
    white-space: nowrap;
}

.pos-labels {
    flex: none;
    width: 23px;
    margin-left: 2px;
}

.pos-values {
    flex: none;
    width: 48px;
    text-align: right;
    white-space: nowrap;
}

.label-z {
    flex: none;
    width: 16px;
    margin-left: 10px;
}

.spin-zoom {
    flex: none;
    width: 96px;
    padding-right: 1px;
}

.spin-zoom .spin-value {
    padding-left: 7px;
}

.spin-zoom .spin-btn,
.spin-rot .spin-btn {
    width: 21px;
}

.spin-zoom .sign,
.spin-rot .sign {
    width: 16px;
    height: 16px;
}

.label-r {
    flex: none;
    width: 13px;
    margin-left: 10px;
}

.spin-rot {
    flex: none;
    width: 107px;
    padding-right: 1px;
}

.spin-rot .spin-value {
    padding-left: 13px;
}

/* open menu and what lies over it */
.menu {
    position: absolute;
    top: 37px;
    left: 67px;
    width: 395px;
    height: 662px;
    background: #2d2d2d;
    border: 1px solid #1b1b1b;
}

.menu hr {
    height: 1px;
    margin: 0;
    border: 0;
    background: #383838;
}

.menu-item {
    position: relative;
    display: flex;
    align-items: center;
    justify-content: space-between;
    height: 25.060px;
    padding: 0 9px 2px 29px;
    white-space: nowrap;
}

.menu-item.off {
    color: #7d7d7d;
}

.menu-item.selected {
    justify-content: flex-start;
    background: #15539e;
}

.key {
    color: #8f8f8f;
}

.sub {
    width: 0;
    height: 0;
    margin-right: 1px;
    border-top: 5.500px solid transparent;
    border-bottom: 5.500px solid transparent;
    border-left: 7px solid #eeeeec;
}

.check {
    position: absolute;
    top: 4px;
    left: 6px;
    width: 17px;
    height: 16px;
    background: #2d2d2d;
    border: 1px solid #bdbdbd;
    border-radius: 3px;
}

.menu-ico {
    position: absolute;
    top: 4px;
    left: 7px;
    width: 17px;
    height: 17px;
}

.tooltip {
    position: absolute;
    top: 702px;
    left: 136px;
    width: 327px;
    height: 43px;
    padding-left: 13px;
    line-height: 43px;
    letter-spacing: -0.36px;
    white-space: nowrap;
    background: #2b2b2b;
    border-radius: 5px;
}

.arrows {
    position: absolute;
    top: 0;
    left: 0;
    width: 924px;
    height: 848px;
    pointer-events: none;
}

.badge {
    position: absolute;
    width: 34px;
    height: 34px;
    font-family: "Liberation Sans", sans-serif;
    font-size: 20px;
    font-weight: bold;
    line-height: 34px;
    letter-spacing: 0;
    text-align: center;
    color: #ffffff;
    background: #f00000;
    border-radius: 50%;
    box-shadow: 0 0 0 1px #111111, 0 0 0 2px #ffffff, 0 0 0 3px #555555;
}

.badge-one {
    top: 50px;
    left: 191px;
}

.badge-two {
    top: 651px;
    left: 283px;
}
```
